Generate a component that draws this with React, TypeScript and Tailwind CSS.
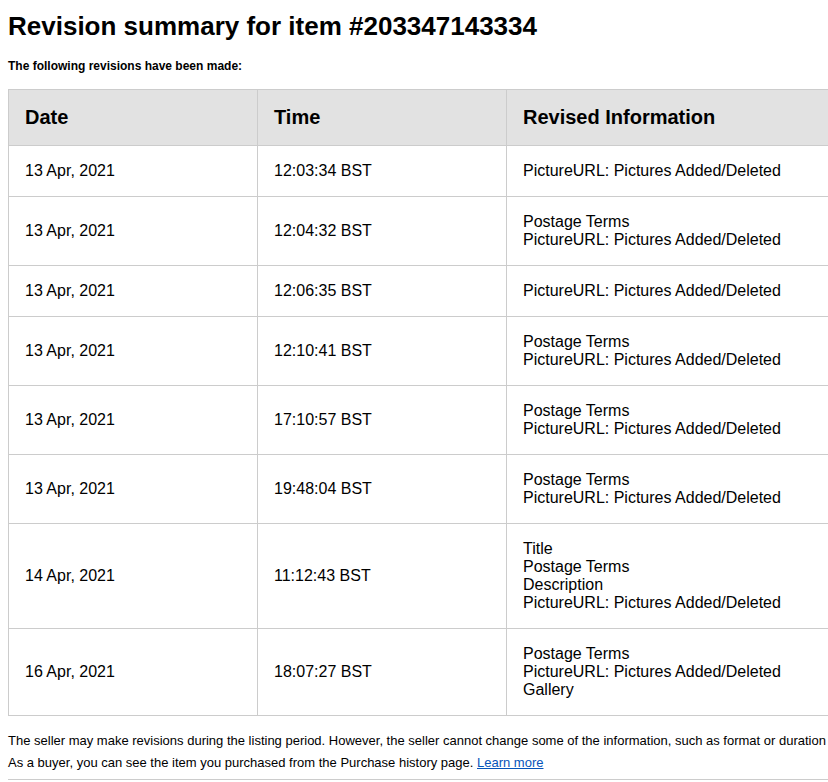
import React from "react";

const rows: { date: string; time: string; info: string[] }[] = [
  { date: "13 Apr, 2021", time: "12:03:34 BST", info: ["PictureURL: Pictures Added/Deleted"] },
  { date: "13 Apr, 2021", time: "12:04:32 BST", info: ["Postage Terms", "PictureURL: Pictures Added/Deleted"] },
  { date: "13 Apr, 2021", time: "12:06:35 BST", info: ["PictureURL: Pictures Added/Deleted"] },
  { date: "13 Apr, 2021", time: "12:10:41 BST", info: ["Postage Terms", "PictureURL: Pictures Added/Deleted"] },
  { date: "13 Apr, 2021", time: "17:10:57 BST", info: ["Postage Terms", "PictureURL: Pictures Added/Deleted"] },
  { date: "13 Apr, 2021", time: "19:48:04 BST", info: ["Postage Terms", "PictureURL: Pictures Added/Deleted"] },
  { date: "14 Apr, 2021", time: "11:12:43 BST", info: ["Title", "Postage Terms", "Description", "PictureURL: Pictures Added/Deleted"] },
  { date: "16 Apr, 2021", time: "18:07:27 BST", info: ["Postage Terms", "PictureURL: Pictures Added/Deleted", "Gallery"] },
];

export default function App() {
  return (
    <div className="w-[828px] h-[782px] overflow-hidden bg-white text-black" style={{ fontFamily: '"Liberation Sans", Arial, sans-serif' }}>
      <div className="w-[1000px] px-2">
        <h1 className="text-[26px] font-bold leading-[30px] pt-[11px]">Revision summary for item #203347143334</h1>
        <p className="text-[12px] font-bold leading-[14px] mt-[18px]">The following revisions have been made:</p>
        <table className="mt-[16px] w-[992px] border-collapse table-fixed">
          <colgroup>
            <col className="w-[249px]" />
            <col className="w-[249px]" />
            <col />
          </colgroup>
          <thead>
            <tr className="bg-[#e2e2e2]">
              <th className="border border-[#cccccc] px-4 py-4 text-left text-[20px] font-bold leading-[23px]">Date</th>
              <th className="border border-[#cccccc] px-4 py-4 text-left text-[20px] font-bold leading-[23px]">Time</th>
              <th className="border border-[#cccccc] px-4 py-4 text-left text-[20px] font-bold leading-[23px]">Revised Information</th>
            </tr>
          </thead>
          <tbody>
            {rows.map((r, i) => (
              <tr key={i}>
                <td className="border border-[#cccccc] px-4 py-4 text-[16px] leading-[18px] align-middle">{r.date}</td>
                <td className="border border-[#cccccc] px-4 py-4 text-[16px] leading-[18px] align-middle">{r.time}</td>
                <td className="border border-[#cccccc] px-4 py-4 text-[16px] leading-[18px] align-middle">
                  {r.info.map((l, j) => (
                    <div key={j}>{l}</div>
                  ))}
                </td>
              </tr>
            ))}
          </tbody>
        </table>
        <p className="text-[13px] leading-[15px] mt-[17px] whitespace-nowrap">
          The seller may make revisions during the listing period. However, the seller cannot change some of the information, such as format or duration
        </p>
        <p className="text-[13px] leading-[15px] mt-[7px]">
          As a buyer, you can see the item you purchased from the Purchase history page.{" "}
          <a href="#" className="text-[#0654ba] underline">Learn more</a>
        </p>
        <div className="mt-[9px] border-t border-[#cccccc]" />
      </div>
    </div>
  );
}
